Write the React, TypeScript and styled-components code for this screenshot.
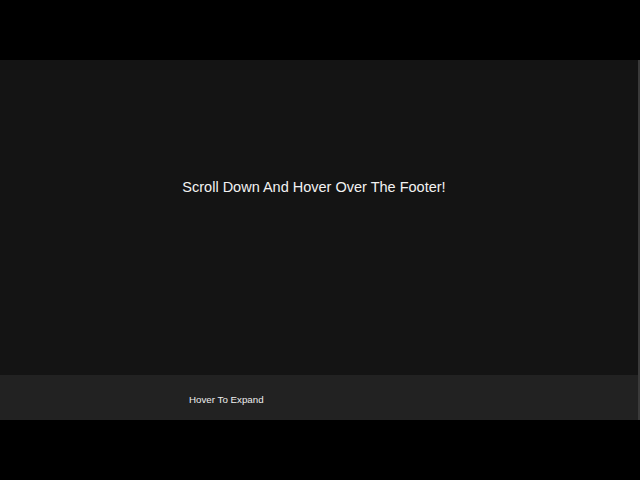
import React from 'react';
import styled, { createGlobalStyle } from 'styled-components';

const GlobalStyle = createGlobalStyle`
  html, body {
    margin: 0;
    padding: 0;
    background: #000;
    font-family: "Liberation Sans", Arial, sans-serif;
  }
`;

const Page = styled.div`
  width: 640px;
  height: 480px;
  padding-top: 60px;
  box-sizing: border-box;
  background: #000;
`;

const Frame = styled.div`
  display: flex;
  flex-direction: column;
  border-right: 2px solid #3a3a3a;
`;

const Hero = styled.section`
  height: 315px;
  background: #141414;
  display: flex;
  justify-content: center;
  padding: 118px 10px 0 0;
  box-sizing: border-box;
`;

const Title = styled.h1`
  margin: 0;
  color: #f2f2f2;
  font-size: 14.5px;
  font-weight: 400;
  line-height: 18px;
`;

const Footer = styled.footer`
  height: 45px;
  background: #222;
  display: flex;
  align-items: center;
  padding-left: 189px;
  box-sizing: border-box;
`;

const Hint = styled.span`
  color: #eee;
  font-size: 9.75px;
  line-height: 14px;
  padding-top: 4px;
`;

const App = () => {
  return (
    <>
      <GlobalStyle />
      <Page>
        <Frame>
          <Hero>
            <Title>Scroll Down And Hover Over The Footer!</Title>
          </Hero>
          <Footer>
            <Hint>Hover To Expand</Hint>
          </Footer>
        </Frame>
      </Page>
    </>
  );
};

export default App;
